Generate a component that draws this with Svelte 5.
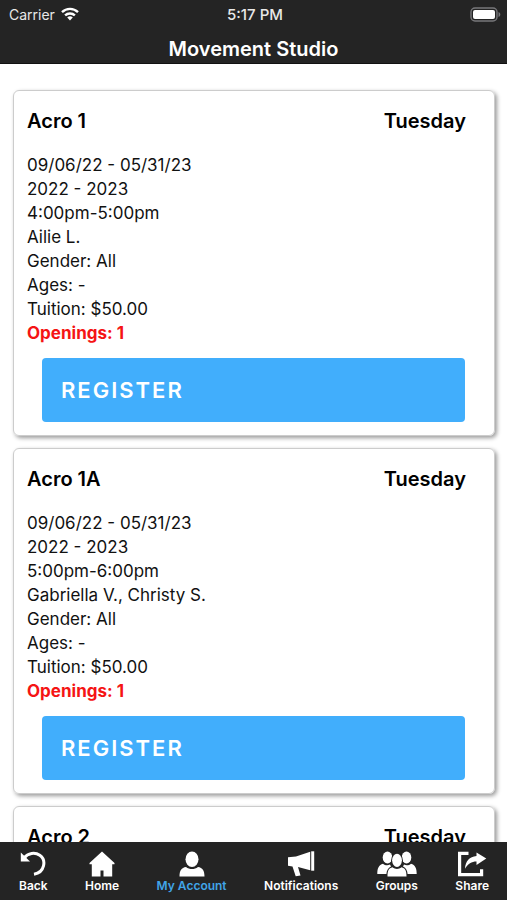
<script>
  const classes = [
    {
      name: 'Acro 1',
      day: 'Tuesday',
      dates: '09/06/22 - 05/31/23',
      session: '2022 - 2023',
      time: '4:00pm-5:00pm',
      instructors: 'Ailie L.',
      gender: 'All',
      ages: '-',
      tuition: '$50.00',
      openings: 1,
    },
    {
      name: 'Acro 1A',
      day: 'Tuesday',
      dates: '09/06/22 - 05/31/23',
      session: '2022 - 2023',
      time: '5:00pm-6:00pm',
      instructors: 'Gabriella V., Christy S.',
      gender: 'All',
      ages: '-',
      tuition: '$50.00',
      openings: 1,
    },
    { name: 'Acro 2', day: 'Tuesday' },
  ];

  const tabs = [
    { id: 'back', label: 'Back' },
    { id: 'home', label: 'Home' },
    { id: 'account', label: 'My Account' },
    { id: 'notifications', label: 'Notifications' },
    { id: 'groups', label: 'Groups' },
    { id: 'share', label: 'Share' },
  ];

  let activeTab = 'account';
</script>

<div class="app">
  <header>
    <div class="status-bar">
      <div class="carrier">
        <span>Carrier</span>
        <svg width="18" height="14" viewBox="0 0 18 14" fill="none" stroke="#fff" stroke-width="2.4">
          <path d="M1 5.1a11.6 11.6 0 0 1 16 0" />
          <path d="M4.1 8.4a7.1 7.1 0 0 1 9.8 0" />
          <path d="M9 13.6 6.2 10.6a4.2 4.2 0 0 1 5.6 0z" fill="#fff" stroke="none" />
        </svg>
      </div>
      <span class="clock">5:17 PM</span>
      <svg class="battery" width="31" height="15" viewBox="0 0 31 15">
        <rect x="1" y="1" width="26" height="13" rx="4" fill="none" stroke="#77777a" stroke-width="1.4" />
        <rect x="3" y="3" width="22" height="9" rx="2" fill="#fff" />
        <path d="M28.5 5c2.4.8 2.4 4.2 0 5z" fill="#77777a" />
      </svg>
    </div>
    <h1>Movement Studio</h1>
  </header>

  <main>
    {#each classes as item}
      <article class="card">
        <div class="card-title">
          <h2>{item.name}</h2>
          <h2>{item.day}</h2>
        </div>
        {#if item.dates}
          <ul>
            <li>{item.dates}</li>
            <li>{item.session}</li>
            <li>{item.time}</li>
            <li>{item.instructors}</li>
            <li>Gender: {item.gender}</li>
            <li>Ages: {item.ages}</li>
            <li>Tuition: {item.tuition}</li>
            <li class="openings">Openings: {item.openings}</li>
          </ul>
          <button class="register">REGISTER</button>
        {/if}
      </article>
    {/each}
  </main>

  <nav>
    {#each tabs as tab}
      <button class="tab" class:active={activeTab === tab.id} on:click={() => (activeTab = tab.id)}>
        {#if tab.id === 'back'}
          <svg width="26" height="26" viewBox="0 0 26 26">
            <path d="M4 7C8 1.800 15 1 19.800 4.200c6.800 4.800 5 17.200-5.800 19" fill="none" stroke="currentColor" stroke-width="3" />
            <path d="M.8 1.500v9h9.200z" fill="currentColor" />
          </svg>
        {:else if tab.id === 'home'}
          <svg width="26" height="26" viewBox="0 0 26 26" fill="currentColor">
            <path d="M13 .6.500 12v1.200h2.300v12.300h8.700v-6h3v6h8.700V13.200h2.300V12z" />
          </svg>
        {:else if tab.id === 'account'}
          <svg width="26" height="26" viewBox="0 0 26 26" fill="currentColor">
            <ellipse cx="13" cy="8.2" rx="6.5" ry="7.8" />
            <path d="M.5 25.5c0-6 2-8.8 6.5-9.5 3.600 2.800 8.400 2.800 12 0 4.500.7 6.500 3.500 6.500 9.500z" />
          </svg>
        {:else if tab.id === 'notifications'}
          <svg width="28" height="26" viewBox="0 0 28 26" fill="currentColor">
            <path d="M1 6.200 9 5.600 23.200.8v18.500L11 16l2.500 8.500-4.800.8L5.500 15.600 1 14.800z" />
            <path d="M24.200.3h3v19.400h-3z" />
          </svg>
        {:else if tab.id === 'groups'}
          <svg width="40" height="26" viewBox="0 0 40 26" fill="currentColor">
            <ellipse cx="10.5" cy="6.5" rx="4.800" ry="6" />
            <ellipse cx="29.5" cy="6.5" rx="4.800" ry="6" />
            <path d="M.3 23c0-6 1.500-9 5.700-10.300 2.200 1.800 4.700 2 7 .8l1 2c-3 1.500-4.300 3.800-4.600 7.500z" />
            <path d="M39.700 23c0-6-1.500-9-5.700-10.300-2.200 1.800-4.700 2-7 .8l-1 2c3 1.500 4.300 3.800 4.600 7.500z" />
            <ellipse cx="20" cy="9.3" rx="5.900" ry="7.600" fill="#242424" />
            <ellipse cx="20" cy="9.3" rx="4.900" ry="6.600" />
            <path d="M10.500 25.500c0-5.600 1.200-8.300 5-9.200 2.700 2.100 6.300 2.100 9 0 3.800.9 5 3.600 5 9.200z" />
          </svg>
        {:else}
          <svg width="30" height="26" viewBox="0 0 30 26">
            <path d="M11.500 2.300H2.600v21.400h22v-5.500" fill="none" stroke="currentColor" stroke-width="3.2" />
            <path d="M19.500 1.500 29.300 7.500l-9.800 6.500v-3.400c-5 0-8.500 2.400-11.500 7.200.4-7.500 4.500-12.300 11.500-12.800z" fill="currentColor" />
          </svg>
        {/if}
        <span>{tab.label}</span>
      </button>
    {/each}
  </nav>
</div>

<style>
  :global(body) {
    margin: 0;
    background: #fff;
  }

  .app {
    display: flex;
    flex-direction: column;
    height: 100vh;
    font-family: Inter, 'Liberation Sans', sans-serif;
    color: #111;
  }

  header {
    flex: none;
    background: #242424;
    color: #fff;
    border-bottom: 1px solid #111;
  }

  .status-bar {
    display: grid;
    grid-template-columns: 1fr auto 1fr;
    align-items: center;
    height: 28px;
    padding: 0 6px 0 9px;
    font-size: 14px;
    color: #e8e8e8;
  }

  .carrier {
    display: flex;
    align-items: center;
    gap: 6px;
  }

  .clock {
    font-size: 15px;
    font-weight: 500;
  }

  .battery {
    justify-self: end;
  }

  h1 {
    margin: 0;
    padding: 9px 0 2px;
    font-size: 20px;
    font-weight: 600;
    line-height: 24px;
    text-align: center;
  }

  main {
    flex: 1;
    min-height: 0;
    overflow-y: auto;
    scrollbar-width: none;
    padding: 26px 12px 12px 13px;
  }

  .card {
    box-sizing: border-box;
    margin-bottom: 12px;
    padding: 18px 12px 13px 13px;
    border: 1px solid #ccc;
    border-radius: 6px;
    box-shadow: 2px 2px 4px rgba(0, 0, 0, 0.4);
  }

  .card-title {
    display: flex;
    justify-content: space-between;
    padding-right: 16px;
  }

  h2 {
    margin: 0;
    color: #000;
    font-size: 20px;
    font-weight: 600;
    line-height: 24px;
  }

  ul {
    margin: 20px 0 13px;
    padding: 0;
    list-style: none;
    font-size: 17px;
    line-height: 24px;
  }

  .openings {
    color: #f51414;
    font-weight: 700;
  }

  .register {
    display: block;
    width: calc(100% - 32px);
    margin: 0 17px 0 15px;
    padding: 20px 19px;
    border: 0;
    border-radius: 4px;
    background: #41aefc;
    color: #fff;
    font-family: inherit;
    font-size: 22px;
    font-weight: 600;
    line-height: 24px;
    letter-spacing: 2px;
    text-align: left;
    cursor: pointer;
  }

  nav {
    flex: none;
    display: flex;
    justify-content: space-between;
    padding: 9px 18px 6px 19px;
    background: #242424;
  }

  .tab {
    display: flex;
    flex-direction: column;
    align-items: center;
    padding: 0;
    border: 0;
    background: none;
    color: #fff;
    font-family: inherit;
    font-size: 12px;
    font-weight: 600;
    line-height: 17px;
    cursor: pointer;
  }

  .tab.active {
    color: #41a5e8;
  }

  .tab.active svg {
    color: #fff;
  }
</style>
